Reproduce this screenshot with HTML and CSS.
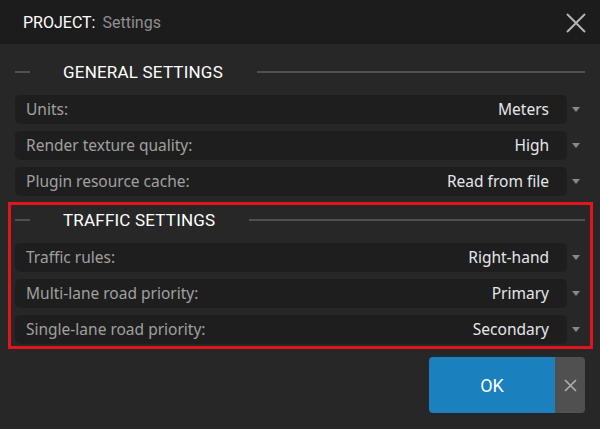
FILE: index.html
```html
<!DOCTYPE html>
<html>
<head>
<meta charset="utf-8">
<link rel="stylesheet" href="styles.css">
</head>
<body>
<div class="dialog">
  <header class="titlebar">
    <div class="title"><span class="title-key">PROJECT:</span><span class="title-val">Settings</span></div>
    <svg class="close" width="20" height="20" viewBox="0 0 20 20"><path d="M1 1 L19 19 M19 1 L1 19" stroke="#b4b4b4" stroke-width="2" fill="none"/></svg>
  </header>
  <main class="content">
    <section class="group">
      <div class="group-title"><span class="line-l"></span><span class="gt-text">GENERAL SETTINGS</span><span class="line-r"></span></div>
      <div class="rows">
        <div class="row"><div class="field"><span class="label">Units:</span><span class="value">Meters</span></div><span class="arrow"></span></div>
        <div class="row"><div class="field"><span class="label">Render texture quality:</span><span class="value">High</span></div><span class="arrow"></span></div>
        <div class="row"><div class="field"><span class="label">Plugin resource cache:</span><span class="value">Read from file</span></div><span class="arrow"></span></div>
      </div>
    </section>
    <section class="group highlighted">
      <div class="group-title"><span class="line-l"></span><span class="gt-text">TRAFFIC SETTINGS</span><span class="line-r"></span></div>
      <div class="rows">
        <div class="row"><div class="field"><span class="label">Traffic rules:</span><span class="value">Right-hand</span></div><span class="arrow"></span></div>
        <div class="row"><div class="field"><span class="label">Multi-lane road priority:</span><span class="value">Primary</span></div><span class="arrow"></span></div>
        <div class="row"><div class="field"><span class="label">Single-lane road priority:</span><span class="value">Secondary</span></div><span class="arrow"></span></div>
      </div>
    </section>
    <div class="actions">
      <div class="btn-group">
        <button class="ok">OK</button>
        <button class="cancel"><svg width="13" height="13" viewBox="0 0 13 13"><path d="M1 1 L12 12 M12 1 L1 12" stroke="#b0b0b0" stroke-width="1.6" fill="none"/></svg></button>
      </div>
    </div>
  </main>
</div>
</body>
</html>
```
FILE: styles.css
```css
* { box-sizing: border-box; }
html, body { margin: 0; padding: 0; }
body {
  width: 600px;
  height: 429px;
  background: #272727;
  font-family: "Noto Sans", sans-serif;
  overflow: hidden;
}
.titlebar {
  height: 44px;
  background: #1c1c1c;
  display: flex;
  align-items: center;
  justify-content: space-between;
  padding: 0 14px 0 23px;
}
.title {
  font-family: Roboto, sans-serif;
  font-size: 16px;
  display: flex;
  gap: 7px;
}
.title-key { color: #ffffff; }
.title-val { color: #8f8f8f; }
.close { display: block; margin-top: 1px; }
.content {
  padding-top: 10px;
}
.group {
  margin: 0 7px 0 8px;
  border: 3px solid transparent;
  padding: 0 0 0 4px;
}
.group:first-child {
  border-top-width: 0;
}
.group-title {
  height: 36px;
  display: flex;
  align-items: center;
  margin-bottom: 5px;
  padding-right: 5px;
}
.highlighted {
  border-color: #e2141d;
  margin-top: 3px;
  padding-bottom: 2px;
}
.highlighted .group-title {
  height: 30px;
  margin-bottom: 8px;
}
.line-l {
  width: 15px;
  height: 2px;
  background: #505050;
}
.line-r {
  flex: 1;
  height: 2px;
  background: #505050;
}
.gt-text {
  font-family: Roboto, sans-serif;
  font-size: 17px;
  letter-spacing: 0.2px;
  color: #ffffff;
  padding: 0 34px 0 33px;
}
.rows {
  display: flex;
  flex-direction: column;
  gap: 7px;
}
.row {
  display: flex;
  align-items: center;
}
.field {
  width: 552px;
  height: 29px;
  background: #1e1e1e;
  border-radius: 5px;
  display: flex;
  align-items: center;
  justify-content: space-between;
  padding: 0 18px 1px 11px;
  font-size: 15.5px;
}
.label { color: #a0a0a0; }
.value { color: #e4e6ea; }
.arrow {
  width: 0;
  height: 0;
  margin-left: 5px;
  border-left: 4px solid transparent;
  border-right: 4px solid transparent;
  border-top: 5px solid #8a8a8a;
}
.actions {
  display: flex;
  justify-content: flex-end;
  padding: 8px 15px 0 0;
}
.btn-group {
  display: flex;
  height: 56px;
  border-radius: 4px;
  overflow: hidden;
}
.btn-group button {
  border: 0;
  margin: 0;
  padding: 0;
  cursor: pointer;
}
.ok {
  width: 126px;
  background: #1a80be;
  color: #ffffff;
  font-family: Roboto, sans-serif;
  font-size: 18px;
}
.cancel {
  width: 30px;
  background: #505050;
  display: flex;
  align-items: center;
  justify-content: center;
}
.cancel svg { display: block; }
```
